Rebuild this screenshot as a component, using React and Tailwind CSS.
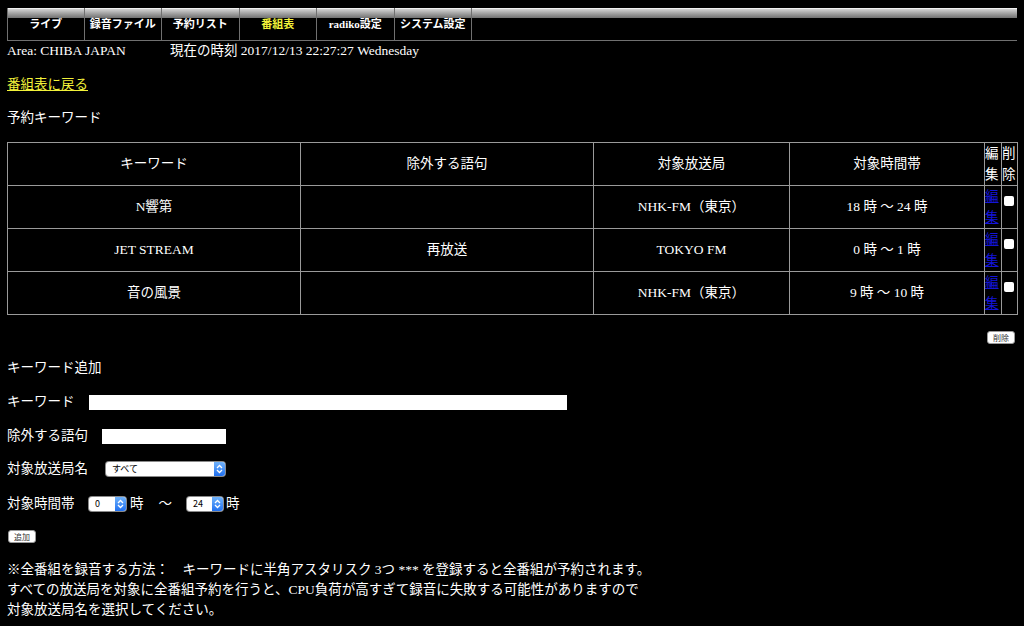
const tabs = ["ライブ", "録音ファイル", "予約リスト", "番組表", "radiko設定", "システム設定"];

const rows = [
  { keyword: "N響第", exclude: "", station: "NHK-FM（東京）", time: "18 時 〜 24 時" },
  { keyword: "JET STREAM", exclude: "再放送", station: "TOKYO FM", time: "0 時 〜 1 時" },
  { keyword: "音の風景", exclude: "", station: "NHK-FM（東京）", time: "9 時 〜 10 時" },
];

const SelectBox = ({ value, width }) => {
  return (
    <span
      className={`inline-flex h-[14px] ${width} items-stretch rounded-[3px] bg-white shadow-[0_0_0_1px_#8a8a8a]`}
    >
      <span className="flex-1 pl-[6px] font-['Noto_Sans_CJK_JP',sans-serif] text-[9px] leading-[14px] text-black">
        {value}
      </span>
      <span className="flex w-[11px] items-center justify-center rounded-r-[3px] bg-gradient-to-b from-[#6fb2fb] to-[#1f6fef]">
        <svg width="7" height="10" viewBox="0 0 7 10" fill="none" stroke="white" strokeWidth="1.3">
          <path d="M1 4 L3.5 1.5 L6 4" />
          <path d="M1 6 L3.5 8.5 L6 6" />
        </svg>
      </span>
    </span>
  );
};

const SmallButton = ({ text }) => {
  return (
    <button
      type="button"
      className="h-[13px] w-[28px] rounded-[3px] border border-[#9a9a9a] bg-white font-['Noto_Sans_CJK_JP',sans-serif] text-[8px] leading-[11px] text-[#333]"
    >
      {text}
    </button>
  );
};

export default function App() {
  return (
    <div className="min-h-screen bg-black px-[7px] pt-[8px] font-['Liberation_Serif','Noto_Sans_CJK_JP',serif] text-[13.5px] leading-[20px] text-white">
      {/* top menu */}
      <div className="flex h-[33px] w-[1010px]">
        {tabs.map((tab, i) => (
          <div
            key={tab}
            className={`flex w-[77.5px] flex-col border-r border-b border-[#707070] ${i === 0 ? "border-l" : ""}`}
          >
            <div className="h-[10px] border-t border-[#f0f0f0] bg-gradient-to-b from-[#d4d4d4] to-[#727272]" />
            <div
              className={`pt-[1px] text-center text-[11px] leading-[11px] font-bold ${tab === "番組表" ? "text-[#f2f23a]" : "text-white"}`}
            >
              {tab}
            </div>
          </div>
        ))}
        <div className="flex flex-1 flex-col border-b border-[#707070]">
          <div className="h-[10px] border-t border-[#f0f0f0] bg-gradient-to-b from-[#d4d4d4] to-[#727272]" />
        </div>
      </div>

      <div className="flex">
        <span className="w-[163px]">Area: CHIBA JAPAN</span>
        <span>現在の時刻 2017/12/13 22:27:27 Wednesday</span>
      </div>

      <div className="mt-[14px]">
        <a href="#" className="text-[#f2f23a] underline">
          番組表に戻る
        </a>
      </div>

      <div className="mt-[13px]">予約キーワード</div>

      {/* keyword table */}
      <table className="mt-[14px] w-[1010px] table-fixed border-collapse">
        <colgroup>
          <col className="w-[293px]" />
          <col className="w-[293px]" />
          <col className="w-[196px]" />
          <col className="w-[195px]" />
          <col className="w-[17px]" />
          <col className="w-[16px]" />
        </colgroup>
        <tbody>
          <tr className="h-[43px]">
            <td className="border border-[#9a9a9a] text-center">キーワード</td>
            <td className="border border-[#9a9a9a] text-center">除外する語句</td>
            <td className="border border-[#9a9a9a] text-center">対象放送局</td>
            <td className="border border-[#9a9a9a] text-center">対象時間帯</td>
            <td className="border border-[#9a9a9a] p-0 leading-[21px]">編集</td>
            <td className="border border-[#9a9a9a] p-0 leading-[21px]">削除</td>
          </tr>
          {rows.map((row) => (
            <tr key={row.keyword} className="h-[43px]">
              <td className="border border-[#9a9a9a] text-center">{row.keyword}</td>
              <td className="border border-[#9a9a9a] text-center">{row.exclude}</td>
              <td className="border border-[#9a9a9a] text-center">{row.station}</td>
              <td className="border border-[#9a9a9a] text-center">{row.time}</td>
              <td className="border border-[#9a9a9a] p-0 align-top leading-[21px]">
                <a href="#" className="text-[#1414d8] underline">
                  編集
                </a>
              </td>
              <td className="border border-[#9a9a9a] p-0 align-top">
                <input
                  type="checkbox"
                  className="mt-[10px] ml-[2px] block h-[10px] w-[10px] appearance-none rounded-[2px] bg-white"
                />
              </td>
            </tr>
          ))}
        </tbody>
      </table>

      <div className="mt-[16px] flex w-[1010px] justify-end pr-[2px]">
        <SmallButton text="削除" />
      </div>

      <div className="mt-[14px]">キーワード追加</div>

      {/* add form */}
      <div className="mt-[14px] flex items-center">
        <span className="w-[82px]">キーワード</span>
        <input type="text" className="h-[15px] w-[478px] bg-white" />
      </div>
      <div className="mt-[14px] flex items-center">
        <span className="w-[95px]">除外する語句</span>
        <input type="text" className="h-[15px] w-[124px] bg-white" />
      </div>
      <div className="mt-[13px] flex items-center">
        <span className="w-[99px]">対象放送局名</span>
        <SelectBox value="すべて" width="w-[119px]" />
      </div>
      <div className="mt-[15px] flex items-center">
        <span className="w-[82px]">対象時間帯</span>
        <SelectBox value="0" width="w-[37px]" />
        <span className="ml-[4px]">時</span>
        <span className="ml-[15px]">〜</span>
        <span className="ml-[15px] flex items-center">
          <SelectBox value="24" width="w-[36px]" />
        </span>
        <span className="ml-[3px]">時</span>
      </div>

      <div className="mt-[12px] pl-[1px]">
        <SmallButton text="追加" />
      </div>

      <div className="mt-[14px] pb-[8px]">
        <div>※全番組を録音する方法：　キーワードに半角アスタリスク 3つ *** を登録すると全番組が予約されます。</div>
        <div>すべての放送局を対象に全番組予約を行うと、CPU負荷が高すぎて録音に失敗する可能性がありますので</div>
        <div>対象放送局名を選択してください。</div>
      </div>
    </div>
  );
}
